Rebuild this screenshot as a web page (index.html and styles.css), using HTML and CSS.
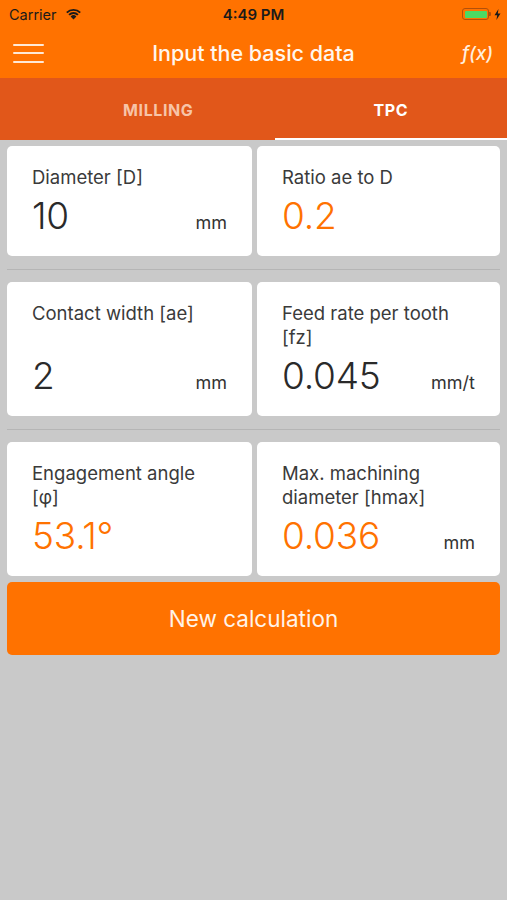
FILE: index.html
```html
<!DOCTYPE html>
<html lang="en">
<head>
<meta charset="utf-8">
<title>Input the basic data</title>
<link rel="stylesheet" href="styles.css">
</head>
<body>
<div class="app">
  <header class="top">
    <div class="status">
      <div class="status-left">
        <span class="carrier">Carrier</span>
        <svg class="wifi" width="17" height="12" viewBox="0 0 17 12">
          <path d="M8.5 11.5 L5.6 8.4 A4.2 4.2 0 0 1 11.4 8.4 Z" fill="#1a1a1a"/>
          <path d="M3.4 6.2 A7.3 7.3 0 0 1 13.6 6.2 L12.2 7.6 A5.3 5.3 0 0 0 4.8 7.6 Z" fill="#1a1a1a"/>
          <path d="M1.1 3.9 A10.6 10.6 0 0 1 15.9 3.9 L14.5 5.3 A8.6 8.6 0 0 0 2.5 5.3 Z" fill="#1a1a1a"/>
        </svg>
      </div>
      <span class="time">4:49 PM</span>
      <div class="status-right">
        <span class="battery"><span class="battery-fill"></span></span>
        <span class="battery-nub"></span>
        <svg class="bolt" width="7" height="11" viewBox="0 0 7 11"><path d="M4.5 0 L0.5 6.2 H3.2 L2.4 11 L6.5 4.6 H3.8 Z" fill="#1a1a1a"/></svg>
      </div>
    </div>
    <nav class="navbar">
      <button class="menu" aria-label="Menu"><span></span><span></span><span></span></button>
      <h1 class="title">Input the basic data</h1>
      <span class="fx">f(x)</span>
    </nav>
  </header>
  <div class="tabs">
    <div class="tab">MILLING</div>
    <div class="tab active">TPC</div>
  </div>
  <main class="content">
    <section class="row">
      <div class="card">
        <div class="label">Diameter [D]</div>
        <div class="value-row"><span class="value">10</span><span class="unit">mm</span></div>
      </div>
      <div class="card">
        <div class="label">Ratio ae to D</div>
        <div class="value-row"><span class="value orange">0.2</span></div>
      </div>
    </section>
    <hr class="sep">
    <section class="row">
      <div class="card">
        <div class="label">Contact width [ae]</div>
        <div class="value-row"><span class="value">2</span><span class="unit">mm</span></div>
      </div>
      <div class="card">
        <div class="label">Feed rate per tooth<br>[fz]</div>
        <div class="value-row"><span class="value">0.045</span><span class="unit">mm/t</span></div>
      </div>
    </section>
    <hr class="sep">
    <section class="row">
      <div class="card">
        <div class="label">Engagement angle<br>[φ]</div>
        <div class="value-row"><span class="value orange">53.1°</span></div>
      </div>
      <div class="card">
        <div class="label">Max. machining<br>diameter [hmax]</div>
        <div class="value-row"><span class="value orange">0.036</span><span class="unit">mm</span></div>
      </div>
    </section>
    <button class="new-calc">New calculation</button>
  </main>
</div>
</body>
</html>
```

FILE: styles.css
```css
* { box-sizing: border-box; }
html, body { margin: 0; padding: 0; }
body {
  background: #c9c9c9;
  font-family: Inter, "Noto Sans", "Liberation Sans", sans-serif;
  color: #2e2e2e;
}
.app { width: 507px; min-height: 900px; background: #c9c9c9; }

.top { background: #ff7200; }
.status {
  height: 28px;
  display: flex;
  align-items: center;
  justify-content: space-between;
  padding: 0 6px 0 9px;
  position: relative;
  color: #1a1a1a;
  font-size: 14.5px;
}
.status-left { display: flex; align-items: center; gap: 8px; }
.carrier { font-weight: 400; }
.time {
  position: absolute;
  left: 0; right: 0;
  text-align: center;
  font-weight: 600;
  font-size: 15px;
  pointer-events: none;
}
.status-right { display: flex; align-items: center; }
.battery {
  width: 27px; height: 12px;
  border: 1.5px solid #b2500a;
  border-radius: 3px;
  padding: 1.5px;
  display: flex;
}
.battery-fill { flex: 1; background: #4cd964; border-radius: 1px; }
.battery-nub { width: 2px; height: 4px; background: #b2500a; border-radius: 0 1px 1px 0; margin-right: 3px; }
.bolt { display: block; }

.navbar {
  height: 50px;
  display: flex;
  align-items: center;
  justify-content: space-between;
  padding: 0 14px 0 13px;
  position: relative;
}
.menu {
  width: 31px; height: 19px;
  padding: 0; border: 0; background: none;
  display: flex; flex-direction: column; justify-content: space-between;
}
.menu span { display: block; height: 2px; background: #ffe9d6; border-radius: 1px; }
.title {
  position: absolute; left: 0; right: 0;
  margin: 0;
  text-align: center;
  font-size: 21.5px;
  font-weight: 500;
  color: #fff6ee;
  pointer-events: none;
}
.fx {
  font-style: italic;
  font-size: 18.5px;
  font-weight: 500;
  color: #ffeede;
}

.tabs {
  height: 62px;
  background: #e1571a;
  display: flex;
  padding-left: 42px;
}
.tab {
  width: 233px;
  display: flex; align-items: center; justify-content: center;
  font-size: 16px;
  font-weight: 700;
  letter-spacing: 0.6px;
  color: #f7c4a8;
  padding-top: 1px;
}
.tab.active { color: #fff; border-bottom: 2px solid #fff; padding-top: 3px; }

.content {
  padding: 6px 7px 0;
  display: flex;
  flex-direction: column;
}
.row {
  display: grid;
  grid-template-columns: 245px 243px;
  gap: 5px;
}
.card {
  background: #fff;
  border-radius: 5px;
  padding: 19px 25px 18px;
  display: flex;
  flex-direction: column;
}
.label {
  font-size: 18.5px;
  line-height: 24px;
  color: #3a3a3a;
}
.value-row {
  margin-top: auto;
  padding-top: 5px;
  display: flex;
  justify-content: space-between;
  align-items: baseline;
  height: 49px;
  line-height: 44px;
}
.value {
  font-size: 37px;
  font-weight: 300;
  color: #2a2a2a;
  letter-spacing: -0.2px;
}
.value.orange { color: #ff7200; }
.unit { font-size: 18px; color: #333; }
.sep {
  border: 0;
  height: 1px;
  background: #b5b5b5;
  margin: 13px 0 12px;
}
.new-calc {
  margin-top: 6px;
  height: 73px;
  border: 0;
  border-radius: 5px;
  background: #ff7200;
  color: #fff3e8;
  font-family: inherit;
  font-size: 22.5px;
  font-weight: 400;
}
```
